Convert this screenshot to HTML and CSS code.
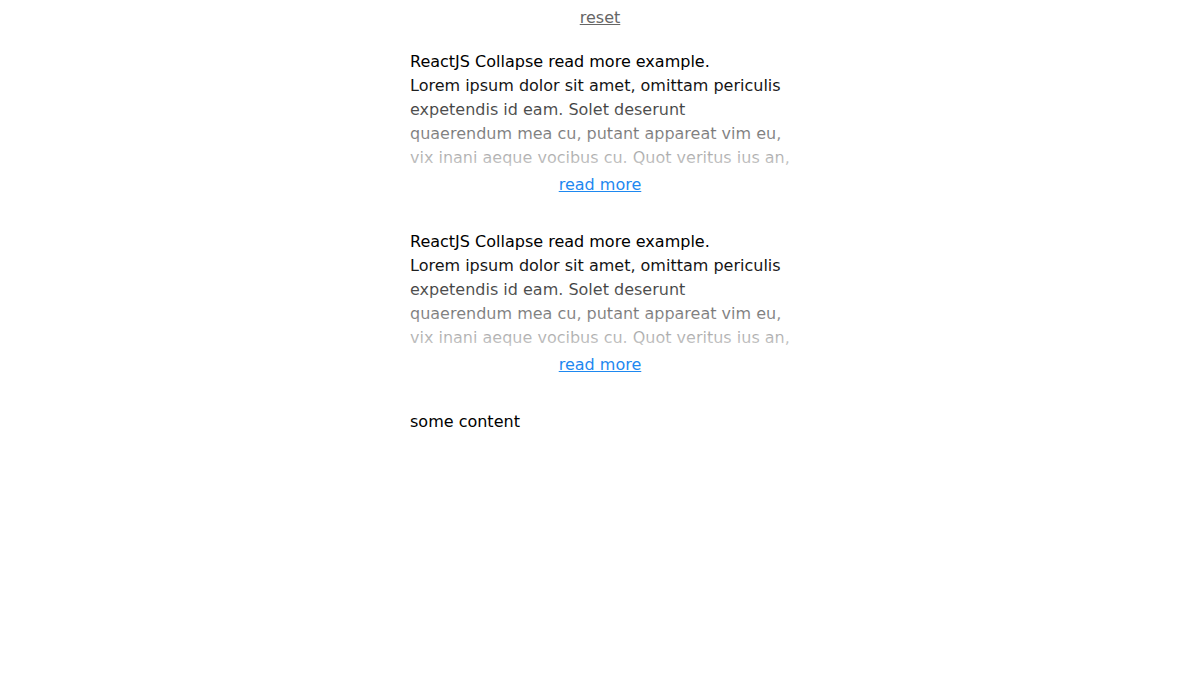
FILE: index.html
```html
<!DOCTYPE html>
<html lang="en">
<head>
    <meta charset="UTF-8">
    <title>ReactJS Collapse read more</title>
    <meta name="viewport" content="width=device-width, initial-scale=1.0">
    <link rel="stylesheet" href="styles.css">
</head>
<body>
    <div class="app">
        <div class="top">
            <a href="#" class="reset">reset</a>
        </div>

        <div class="read-more">
            <div class="read-more-body">
                ReactJS Collapse read more example.<br>
                Lorem ipsum dolor sit amet, omittam periculis expetendis id eam. Solet deserunt quaerendum mea cu, putant appareat vim eu, vix inani aeque vocibus cu. Quot veritus ius an, eu vim dicant gloriatur, ad per graece fuisset. Ei duo nihil doctus, mel ea tamquam invenire. Cu eum virtute eruditi.
                <div class="fade"></div>
            </div>
            <div class="read-more-toggle">
                <a href="#">read more</a>
            </div>
        </div>

        <div class="read-more">
            <div class="read-more-body">
                ReactJS Collapse read more example.<br>
                Lorem ipsum dolor sit amet, omittam periculis expetendis id eam. Solet deserunt quaerendum mea cu, putant appareat vim eu, vix inani aeque vocibus cu. Quot veritus ius an, eu vim dicant gloriatur, ad per graece fuisset. Ei duo nihil doctus, mel ea tamquam invenire. Cu eum virtute eruditi.
                <div class="fade"></div>
            </div>
            <div class="read-more-toggle">
                <a href="#">read more</a>
            </div>
        </div>

        <p class="content">some content</p>
    </div>
</body>
</html>
```

FILE: styles.css
```css
body {
    margin: 9px 8px 8px;
    font-family: "DejaVu Sans", sans-serif;
    font-size: 16px;
    color: #000;
    background: #fff;
}
.app {
    width: 380px;
    margin: 0 auto;
}
.top {
    text-align: center;
    line-height: 18px;
}
.reset {
    color: #666;
    text-decoration: underline;
}
.read-more {
    margin-top: 23px;
    margin-bottom: 33px;
}
.read-more-body {
    position: relative;
    height: 120px;
    overflow: hidden;
    line-height: 24px;
}
/* fades the clipped text out toward the toggle */
.fade {
    position: absolute;
    left: 0;
    right: 0;
    top: 0;
    bottom: 0;
    background: linear-gradient(to bottom, rgba(255, 255, 255, 0) 22%, rgba(255, 255, 255, 0.82) 100%);
}
.read-more-toggle {
    text-align: center;
    line-height: 24px;
    margin-top: 3px;
}
.read-more-toggle a {
    color: #1e88f0;
    text-decoration: underline;
}
.read-more + .read-more {
    margin-top: 0;
}
.content {
    margin: 0;
    line-height: 24px;
}
```
